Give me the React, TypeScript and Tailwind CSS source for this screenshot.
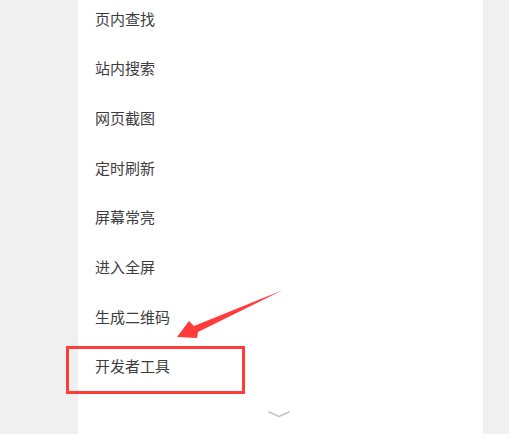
const items = ["页内查找", "站内搜索", "网页截图", "定时刷新", "屏幕常亮", "进入全屏", "生成二维码", "开发者工具"];

export default function App() {
  return (
    <div className="relative w-[509px] h-[434px] overflow-hidden bg-[#f0f0f0]" style={{ fontFamily: '"Noto Sans CJK SC", "Noto Sans", sans-serif' }}>
      <div className="ml-[78px] w-[405px] h-full bg-white flex flex-col">
        <ul className="-mt-[6px] flex flex-col">
          {items.map((t) => (
            <li key={t} className="h-[49.7px] flex items-center pl-[17px] text-[15px] text-[#3d3d3d]">
              {t}
            </li>
          ))}
        </ul>
        <div className="flex justify-center mt-auto mb-[16px] pr-[3px]">
          <svg width="22" height="7" viewBox="0 0 22 7" fill="none">
            <path d="M1 1 L11 5.5 L21 1" stroke="#c4c4c4" strokeWidth="1.6" strokeLinecap="round" strokeLinejoin="round" />
          </svg>
        </div>
      </div>

      {/* annotation box */}
      <div className="absolute left-[66px] top-[346px] w-[179px] h-[48px] border-[3px] border-[#ff3b3b]" />

      {/* annotation arrow */}
      <svg className="absolute left-0 top-0" width="509" height="434" viewBox="0 0 509 434">
        <polygon points="283,290 198,332 197,338 177,337 189,321 194,326" fill="#ff3b3b" />
      </svg>
    </div>
  );
}
